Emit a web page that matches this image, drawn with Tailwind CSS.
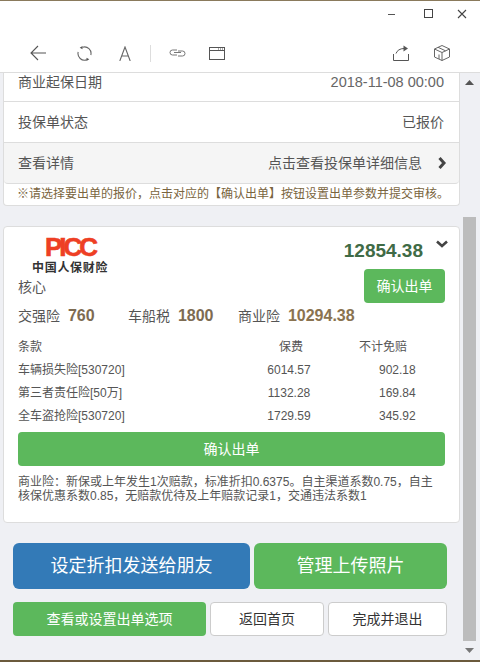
<!DOCTYPE html>
<html lang="en">
<head>
    <meta charset="UTF-8">
    <title>出单</title>
    <script src="https://cdn.jsdelivr.net/npm/@tailwindcss/browser@4"></script>
</head>
<body class="w-[480px] h-[662px] overflow-hidden bg-white font-['Liberation_Sans','Noto_Sans_CJK_SC',sans-serif] text-[#555]">
    <div class="h-px bg-[#8a7a5c]"></div>

    <!-- Title bar -->
    <div class="h-[33px] pt-[5px] flex justify-end items-start text-[#444]">
        <svg class="w-[34px] h-[16px] mr-[1px]" viewBox="0 0 34 16" fill="none" stroke="#555" stroke-width="1"><path d="M11 8.500h7"/></svg>
        <svg class="w-[34px] h-[16px]" viewBox="0 0 34 16" fill="none" stroke="#444" stroke-width="1"><rect x="12.500" y="3.500" width="8" height="8"/></svg>
        <svg class="w-[34px] h-[16px]" viewBox="0 0 34 16" fill="none" stroke="#444" stroke-width="1.100"><path d="M12 4l8 8M20 4l-8 8"/></svg>
    </div>

    <!-- Toolbar -->
    <div class="h-[38px] pl-[30px] pr-[30px] flex items-center">
        <svg class="w-[16px] h-[16px]" viewBox="0 0 16 16" fill="none" stroke="#555" stroke-width="1.100"><path d="M16 8H1M8 1L1 8l7 7"/></svg>
        <svg class="w-[15px] h-[15px] ml-[31px]" viewBox="0 0 15 15" fill="none" stroke="#666" stroke-width="1.100"><path d="M5.500 1.200A6.500 6.500 0 0 1 13.800 9"/><path d="M9.800 13.700A6.500 6.500 0 0 1 1.200 6"/><path d="M5.500 0l-2.800 1.700 2.800 1.600zM9.500 11.700l2.800 1.500-2.800 1.700z" fill="#555" stroke="none"/></svg>
        <svg class="w-[12px] h-[15px] ml-[27px]" viewBox="0 0 12 15" fill="none" stroke="#666" stroke-width="1.100"><path d="M0.800 15L6 1l5.200 14M2.500 10h7"/></svg>
        <div class="w-px h-[17px] bg-[#ddd] ml-[19px]"></div>
        <svg class="w-[17px] h-[8px] ml-[18px]" viewBox="0 0 17 8" fill="none" stroke="#777" stroke-width="1"><path d="M8 1H3.500a2.500 2.500 0 0 0 0 5H8M9 2h4.500a2.500 2.500 0 0 1 0 5H9M5 3.500h7"/></svg>
        <svg class="w-[16px] h-[13px] ml-[23px]" viewBox="0 0 16 13" fill="none" stroke="#555" stroke-width="1"><rect x="0.500" y="0.500" width="15" height="12"/><path d="M1 3.500h14M9 2h1M11 2h1M13 2h1"/></svg>
        <div class="flex-1"></div>
        <svg class="w-[16px] h-[16px]" viewBox="0 0 16 16" fill="none" stroke="#555" stroke-width="1"><path d="M0.500 9v6.500h15V9M3 8.500c1-3 4-5 8-5"/><path d="M10.500 0.500l4.500 3-4.500 3z" fill="#555" stroke="none"/></svg>
        <svg class="w-[16px] h-[16px] ml-[25px]" viewBox="0 0 16 16" fill="none" stroke="#666" stroke-width="1"><path d="M8 0.500L15.500 4v8L8 15.500 0.500 12V4zM0.500 4L8 7.500 15.500 4M8 7.500v8M4 2.300l7.500 3.500M5 9.500v4.500"/></svg>
    </div>

    <!-- Content -->
    <div class="h-[588px] flex bg-[#eff0f4] border-t border-[#ddd]">
        <div class="w-[463px] pl-[3px]">
            <!-- Quote summary -->
            <div class="w-[457px] h-[133px] bg-white border-x border-b border-[#ddd] rounded-b">
                <div class="h-[29px] pl-[14px] pr-[15px] flex justify-between items-start border-b border-[#ddd] text-[14px] leading-[19px]">
                    <span>商业起保日期</span><span class="text-[14.500px] text-[#666]">2018-11-08 00:00</span>
                </div>
                <div class="h-[41px] pl-[14px] pr-[15px] flex justify-between items-center border-b border-[#ddd] text-[14px]">
                    <span>投保单状态</span><span>已报价</span>
                </div>
                <div class="h-[41px] pl-[14px] pr-[15px] flex justify-between items-center bg-[#f5f5f5] border-b border-[#ddd] rounded-b text-[14px]">
                    <span>查看详情</span>
                    <span class="flex items-center">点击查看投保单详细信息
                        <svg class="w-[9px] h-[12px] ml-[16px] -mr-[3px]" viewBox="0 0 9 12" fill="none" stroke="#444" stroke-width="3"><path d="M1.500 1l4.500 5-4.500 5"/></svg>
                    </span>
                </div>
                <p class="pl-[13px] text-[12px] leading-[20px] text-[#7a6540] whitespace-nowrap">※请选择要出单的报价，点击对应的【确认出单】按钮设置出单参数并提交审核。</p>
            </div>

            <!-- PICC quote card -->
            <div class="w-[457px] h-[297px] mt-[20px] pl-[14px] pr-[14px] bg-white border border-[#ddd] rounded">
                <div class="h-[76px] flex justify-between">
                    <div class="pt-[10px]">
                        <div class="ml-[27px] h-[21px] leading-[21px] text-[26px] font-bold tracking-[-3px] text-[#ee3f24] [-webkit-text-stroke:0.600px_#ee3f24] font-['Liberation_Sans',sans-serif]">PICC</div>
                        <div class="ml-[14px] mt-[3px] text-[12px] leading-[14px] tracking-[0.700px] font-bold text-[#333] whitespace-nowrap">中国人保财险</div>
                        <div class="mt-[2px] text-[14px] leading-[20px]">核心</div>
                    </div>
                    <div class="flex flex-col items-end">
                        <div class="flex items-start pt-[12px]">
                            <span class="text-[19px] leading-[24px] font-bold text-[#3f6b46]">12854.38</span>
                            <svg class="w-[12px] h-[9px] mt-[1px] ml-[13px] -mr-[3px]" viewBox="0 0 12 9" fill="none" stroke="#444" stroke-width="2.600"><path d="M1 1.500l5 4.500 5-4.500"/></svg>
                        </div>
                        <button class="w-[81px] h-[34px] mt-[6px] bg-[#5cb85c] text-white text-[14px] rounded">确认出单</button>
                    </div>
                </div>
                <div class="h-[24px] mt-[1px] flex items-center text-[14px]">
                    <span class="w-[110px]">交强险 <b class="ml-[4px] text-[16px] text-[#7d6b52]">760</b></span>
                    <span class="w-[110px]">车船税 <b class="ml-[4px] text-[16px] text-[#7d6b52]">1800</b></span>
                    <span>商业险 <b class="ml-[4px] text-[16px] text-[#8a7350]">10294.38</b></span>
                </div>
                <table class="w-full table-fixed mt-[8px] text-[12px] leading-[23px]">
                    <tbody>
                        <tr><td class="w-[222px]">条款</td><td class="w-[92px] text-center pl-[10px]">保费</td><td class="pl-[27px]">不计免赔</td></tr>
                        <tr><td>车辆损失险[530720]</td><td class="text-center pl-[6px]">6014.57</td><td class="pl-[47px]">902.18</td></tr>
                        <tr><td>第三者责任险[50万]</td><td class="text-center pl-[6px]">1132.28</td><td class="pl-[47px]">169.84</td></tr>
                        <tr><td>全车盗抢险[530720]</td><td class="text-center pl-[6px]">1729.59</td><td class="pl-[47px]">345.92</td></tr>
                    </tbody>
                </table>
                <button class="block w-[427px] h-[34px] mt-[4px] bg-[#5cb85c] text-white text-[14px] rounded">确认出单</button>
                <p class="mt-[9px] text-[12px] leading-[14px] whitespace-pre-line">商业险：新保或上年发生1次赔款，标准折扣0.6375。自主渠道系数0.75，自主
核保优惠系数0.85，无赔款优待及上年赔款记录1，交通违法系数1</p>
            </div>

            <!-- Actions -->
            <div class="flex gap-[4px] mt-[20px] ml-[10px]">
                <button class="w-[237px] h-[46px] bg-[#337ab7] text-white text-[18px] rounded-md">设定折扣发送给朋友</button>
                <button class="w-[193px] h-[46px] bg-[#5cb85c] text-white text-[18px] rounded-md">管理上传照片</button>
            </div>
            <div class="flex gap-[4px] mt-[13px] ml-[10px] text-[14px]">
                <button class="w-[193px] h-[34px] bg-[#5cb85c] text-white rounded">查看或设置出单选项</button>
                <button class="w-[114px] h-[34px] bg-white border border-[#ccc] text-[#333] rounded">返回首页</button>
                <button class="w-[119px] h-[34px] bg-white border border-[#ccc] text-[#333] rounded">完成并退出</button>
            </div>
        </div>

        <!-- Scrollbar -->
        <div class="w-[13px] flex flex-col items-center">
            <svg class="w-[9px] h-[5px] mt-[7px]" viewBox="0 0 9 5" fill="#555"><path d="M4.500 0L9 5H0z"/></svg>
            <div class="w-[13px] h-[424px] mt-[132px] bg-[#bcbcbc]"></div>
            <svg class="w-[9px] h-[5px] mt-[7px]" viewBox="0 0 9 5" fill="#777"><path d="M0 0h9L4.500 5z"/></svg>
        </div>
    </div>
    <div class="h-[2px] bg-[#6b5a3c]"></div>
</body>
</html>
